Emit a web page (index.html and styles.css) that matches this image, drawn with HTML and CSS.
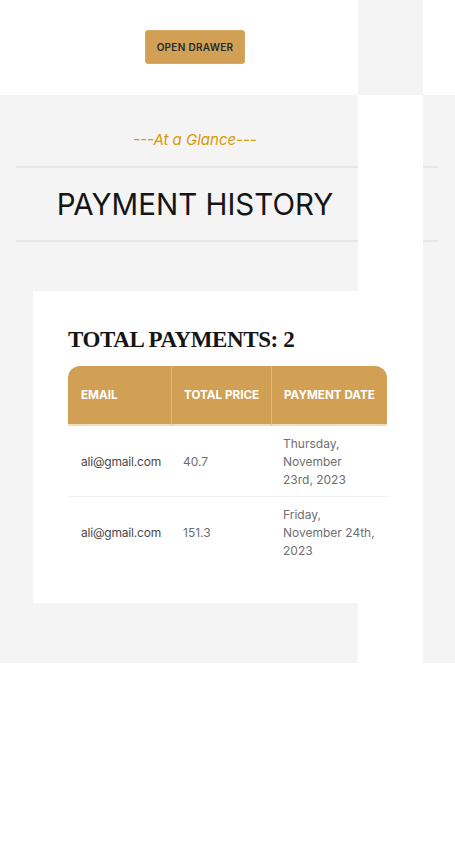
FILE: index.html
```html
<!DOCTYPE html>
<html lang="en">
<head>
<meta charset="utf-8">
<title>Payment History</title>
<link rel="stylesheet" href="styles.css">
</head>
<body>
<div class="page">
  <div class="strip"></div>
  <header class="topbar">
    <button class="drawer-btn" type="button">Open drawer</button>
  </header>
  <main class="section">
    <p class="subtitle">---At a Glance---</p>
    <h2 class="heading"><span>PAYMENT HISTORY</span></h2>
    <div class="card">
      <h3 class="total">Total Payments: 2</h3>
      <table class="table">
        <thead>
          <tr>
            <th class="c1">Email</th>
            <th class="c2">Total Price</th>
            <th class="c3">Payment Date</th>
          </tr>
        </thead>
        <tbody>
          <tr>
            <td class="email">ali@gmail.com</td>
            <td>40.7</td>
            <td>Thursday, November 23rd, 2023</td>
          </tr>
          <tr>
            <td class="email">ali@gmail.com</td>
            <td>151.3</td>
            <td>Friday, November 24th, 2023</td>
          </tr>
        </tbody>
      </table>
    </div>
  </main>
</div>
</body>
</html>
```

FILE: styles.css
```css
* { box-sizing: border-box; }
html, body { margin: 0; padding: 0; background: #fff; }
body { font-family: Inter, "Liberation Sans", sans-serif; }

.page { position: relative; }

.strip {
  position: absolute;
  left: 358px;
  top: 0;
  width: 65px;
  height: 663px;
  background: linear-gradient(#f4f4f4 0 95px, #ffffff 95px);
  z-index: 1;
}

.topbar {
  height: 95px;
  width: 390px;
  display: flex;
  align-items: center;
  justify-content: center;
  background: #fff;
}

.drawer-btn {
  width: 100px;
  height: 34px;
  border: 1px solid #d7a961;
  border-radius: 3px;
  background: #d1a054;
  color: #1f2937;
  font-family: Inter, "Liberation Sans", sans-serif;
  font-size: 10px;
  font-weight: 600;
  letter-spacing: 0.3px;
  text-transform: uppercase;
  padding: 0;
  margin-top: -1px;
}

.section {
  background: #f4f4f4;
  padding: 33px 0 60px;
}

.subtitle {
  margin: 0 0 14px;
  width: 390px;
  text-align: center;
  font-style: italic;
  font-size: 15px;
  line-height: 24px;
  color: #d99904;
}

.heading {
  margin: 0 17px 49px 16px;
  padding: 17px 64px 17px 0;
  border-top: 2px solid #e6e7ec;
  border-bottom: 2px solid #e6e7ec;
  text-align: center;
  font-weight: 400;
  font-size: 29.5px;
  line-height: 38px;
  color: #151515;
}

.card {
  position: relative;
  z-index: 2;
  margin-left: 33px;
  width: 390px;
  background: #fff;
  padding: 33px 36px 36px 35px;
}

.total {
  margin: 0 0 10px;
  font-family: "Liberation Serif", "DejaVu Serif", serif;
  font-weight: 700;
  font-size: 23px;
  letter-spacing: -0.4px;
  line-height: 32px;
  text-transform: uppercase;
  color: #151515;
}

.table {
  width: 319px;
  border-collapse: separate;
  border-spacing: 0;
  table-layout: fixed;
}

.table th {
  background: #d1a054;
  color: #fff;
  font-size: 11.7px;
  font-weight: 700;
  text-transform: uppercase;
  text-align: left;
  padding: 21px 12px 21px 13px;
  line-height: 16px;
  border-bottom: 2px solid #f1ddba;
  white-space: nowrap;
}
.table th + th { border-left: 1px solid #e1bd86; padding-left: 12px; }
.table th.c1 { width: 103px; border-top-left-radius: 12px; }
.table th.c2 { width: 100px; }
.table th.c3 { width: 116px; border-top-right-radius: 12px; }

.table td {
  font-size: 12px;
  line-height: 18px;
  color: #6f6f6f;
  padding: 9px 12px 7px 13px;
  border-bottom: 1px solid #f0f0f0;
  vertical-align: middle;
}
.table td + td { padding-left: 12px; }
.table td.email { color: #4a4a4a; letter-spacing: -0.2px; }
.table tbody tr:last-child td { border-bottom: none; }
```
